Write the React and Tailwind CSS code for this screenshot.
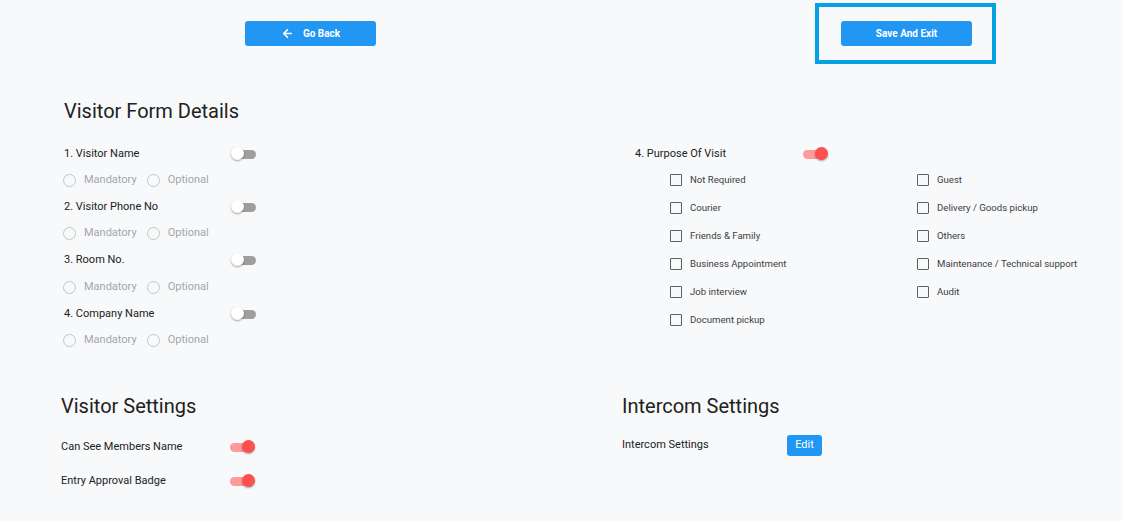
import { ArrowLeft } from "lucide-react";

const formFields = ["1. Visitor Name", "2. Visitor Phone No", "3. Room No.", "4. Company Name"];

const purposeLeft = ["Not Required", "Courier", "Friends & Family", "Business Appointment", "Job interview", "Document pickup"];
const purposeRight = ["Guest", "Delivery / Goods pickup", "Others", "Maintenance / Technical support", "Audit"];

function Toggle({ on = false }) {
  return (
    <div className="relative h-[14px] w-[25px] shrink-0">
      <div
        className={`absolute top-[2.5px] h-[9px] w-[20px] rounded-full ${
          on ? "left-0 bg-[#fd9b9b]" : "right-0 bg-[#9e9e9e]"
        }`}
      />
      <div
        className={`absolute top-0 h-[13px] w-[13px] rounded-full shadow-[0_1px_2px_rgba(0,0,0,0.35)] ${
          on ? "right-0 bg-[#ff4f4f]" : "left-0 bg-white"
        }`}
      />
    </div>
  );
}

function Radio({ label }) {
  return (
    <div className="flex items-center gap-[8px]">
      <span className="h-[13px] w-[13px] rounded-full border-[1.5px] border-[#c4c4c4]" />
      <span className="text-[11px] text-[#a3a6ab]">{label}</span>
    </div>
  );
}

function Check({ label }) {
  return (
    <div className="flex h-[28px] items-center gap-[8px]">
      <span className="h-[12px] w-[12px] rounded-[1px] border-[1.5px] border-[#5f5f5f]" />
      <span className="text-[9.6px] text-[#3d3d3d]">{label}</span>
    </div>
  );
}

function BlueButton({ children, className = "" }) {
  return (
    <button
      className={`flex h-[25px] w-[131px] items-center justify-center gap-[9px] rounded-[3px] bg-[#2196f3] text-[10px] font-bold text-white ${className}`}
    >
      {children}
    </button>
  );
}

export default function App() {
  return (
    <div className="min-h-[521px] w-[1123px] bg-[#f8f9fa] font-['Roboto',sans-serif] text-[#212121]">
      <div className="flex items-start pt-[3px]">
        <BlueButton className="ml-[245px] mt-[18px]">
          <ArrowLeft size={13} strokeWidth={3} />
          <span>Go Back</span>
        </BlueButton>
        <div className="ml-[439px] h-[61px] w-[181px] border-[4px] border-[#06a0e5] pl-[22px] pt-[14px]">
          <BlueButton>Save And Exit</BlueButton>
        </div>
      </div>

      <div className="pl-[64px] pt-[35px]">
        <h2 className="text-[20px] leading-[24px]">Visitor Form Details</h2>
        <div className="mt-[18px] flex">
          <div className="w-[571px]">
            {formFields.map((f, i) => (
              <div key={f}>
                <div className="flex h-[26px] items-center">
                  <span className="w-[167px] text-[11px]">{f}</span>
                  <Toggle />
                </div>
                <div className={`-ml-px flex items-center gap-[10px] ${i === 2 ? "h-[28px]" : "h-[27px]"}`}>
                  <Radio label="Mandatory" />
                  <Radio label="Optional" />
                </div>
              </div>
            ))}
          </div>
          <div>
            <div className="flex h-[26px] items-center">
              <span className="w-[168px] text-[11px]">4. Purpose Of Visit</span>
              <Toggle on />
            </div>
            <div className="-mt-px flex pl-[35px]">
              <div className="w-[247px]">
                {purposeLeft.map((p) => (
                  <Check key={p} label={p} />
                ))}
              </div>
              <div>
                {purposeRight.map((p) => (
                  <Check key={p} label={p} />
                ))}
              </div>
            </div>
          </div>
        </div>
      </div>

      <div className="flex pl-[61px] pt-[40px]">
        <div className="w-[561px]">
          <h2 className="text-[20px] leading-[24px]">Visitor Settings</h2>
          <div className="mt-[12px] flex h-[34px] items-center">
            <span className="w-[169px] text-[11px]">Can See Members Name</span>
            <Toggle on />
          </div>
          <div className="flex h-[34px] items-center">
            <span className="w-[169px] text-[11px]">Entry Approval Badge</span>
            <Toggle on />
          </div>
        </div>
        <div>
          <h2 className="text-[20px] leading-[24px]">Intercom Settings</h2>
          <div className="mt-[12px] flex h-[30px] items-center">
            <span className="w-[165px] text-[11px]">Intercom Settings</span>
            <button className="h-[21px] w-[35px] rounded-[3px] bg-[#2196f3] text-[11px] text-white">Edit</button>
          </div>
        </div>
      </div>
    </div>
  );
}
